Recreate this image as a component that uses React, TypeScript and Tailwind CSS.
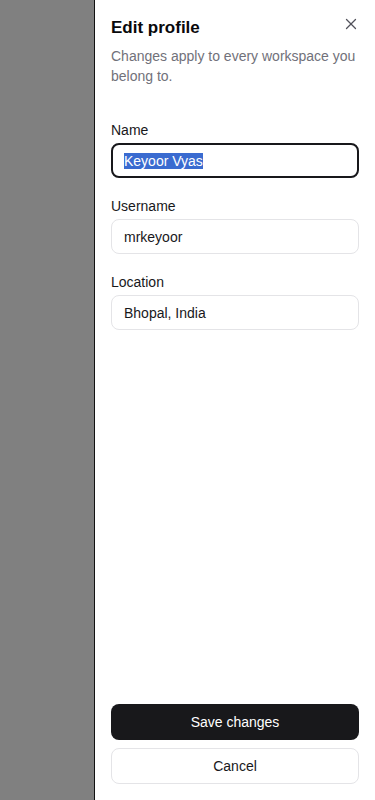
import { useEffect, useRef } from "react";
import { X } from "lucide-react";

const font = { fontFamily: '"Liberation Sans", Arial, sans-serif' };

function Field({ label, value, inputRef }: { label: string; value: string; inputRef?: React.Ref<HTMLInputElement> }) {
  return (
    <label className="flex flex-col">
      <span className="text-sm leading-5 text-[#18181b]">{label}</span>
      <input
        ref={inputRef}
        defaultValue={value}
        className="mt-[3px] h-[35px] w-full rounded-lg border border-[#e4e4e7] bg-white px-3 text-sm text-[#18181b] outline-none focus:border-2 focus:border-[#18181b] focus:px-[11px] selection:bg-[#3a6bd0] selection:text-white"
      />
    </label>
  );
}

export default function App() {
  const nameRef = useRef<HTMLInputElement>(null);

  useEffect(() => {
    // focus + select the first field like the screenshot
    nameRef.current?.focus();
    nameRef.current?.select();
  }, []);

  return (
    <div className="flex h-[800px] w-[375px] bg-[#808080]" style={font}>
      <div className="w-[94px] shrink-0" />
      {/* Sheet panel */}
      <aside className="relative flex flex-1 flex-col border-l border-[#111] bg-white px-4 pb-4 pt-[17px]">
        <button className="absolute right-[15px] top-[15px] text-[#52525b]" aria-label="Close">
          <X size={18} strokeWidth={1.75} />
        </button>

        <h2 className="text-[17px] font-bold leading-[22px] text-[#09090b]">Edit profile</h2>
        <p className="mt-[7px] text-sm leading-5 text-[#71717a]">
          Changes apply to every workspace you belong to.
        </p>

        <div className="mt-[34px] flex flex-col gap-[18px]">
          <Field label="Name" value="Keyoor Vyas" inputRef={nameRef} />
          <Field label="Username" value="mrkeyoor" />
          <Field label="Location" value="Bhopal, India" />
        </div>

        <div className="mt-auto flex flex-col gap-2">
          <button className="h-9 w-full rounded-lg bg-[#18181b] text-sm text-white">Save changes</button>
          <button className="h-9 w-full rounded-lg border border-[#e4e4e7] bg-white text-sm text-[#18181b]">
            Cancel
          </button>
        </div>
      </aside>
    </div>
  );
}
